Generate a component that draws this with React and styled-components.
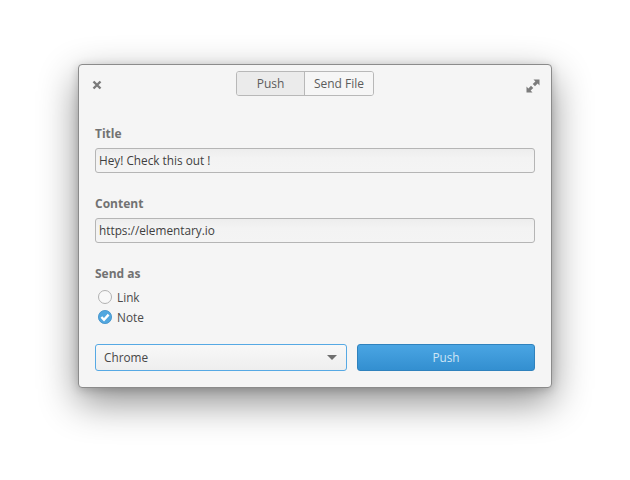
import React from 'react';
import styled, { createGlobalStyle } from 'styled-components';

const Global = createGlobalStyle`
  html, body { margin: 0; padding: 0; background: #fff; }
  body { width: 630px; height: 480px; overflow: hidden; font-family: "Open Sans", "Noto Sans", sans-serif; font-size: 11.8px; color: #4d4d4d; }
`;

const Stage = styled.div`
  padding: 64px 78px 0;
`;
const Win = styled.div`
  box-sizing: border-box;
  width: 474px;
  height: 324px;
  background: #f5f5f5;
  border: 1px solid #8b8b8b;
  border-radius: 4px;
  box-shadow: 0 14px 38px rgba(0,0,0,.45), 0 2px 10px rgba(0,0,0,.18);
  display: flex;
  flex-direction: column;
  padding: 0 15px 0 16px;
`;
const Header = styled.header`
  height: 58px;
  padding-top: 6px;
  box-sizing: border-box;
  margin: 0 -15px 0 -16px;
  display: grid;
  grid-template-columns: 157px auto 1fr;
  align-items: start;
`;
const IconSlot = styled.div`
  display: flex;
  justify-content: ${p => p.$end ? 'flex-end' : 'flex-start'};
  padding: 6px ${p => p.$end ? '11px' : '0'} 0 ${p => p.$end ? '0' : '13px'};
  color: #7e7e7e;
`;
const Segmented = styled.div`
  display: flex;
  height: 25px;
  box-sizing: border-box;
  border: 1px solid #b8b8b8;
  border-radius: 3px;
  overflow: hidden;
`;
const Seg = styled.div`
  width: ${p => p.$w}px;
  display: flex;
  align-items: center;
  justify-content: center;
  padding-bottom: 1px;
  box-sizing: border-box;
  font-size: 12px;
  background: ${p => p.$active ? '#ebebeb' : '#f6f6f6'};
  ${p => p.$active ? 'border-right: 1px solid #b8b8b8;' : ''}
  color: #5c5c5c;
`;
const Field = styled.div`
  display: flex;
  flex-direction: column;
  margin-bottom: 20px;
`;
const Label = styled.label`
  font-weight: 700;
  font-size: 12px;
  color: #727272;
  line-height: 18px;
  height: 18px;
  margin-bottom: 5px;
  margin-top: 2px;
`;
const Input = styled.div`
  box-sizing: border-box;
  width: 440px;
  height: 25px;
  border: 1px solid #b5b5b5;
  border-radius: 3px;
  background: linear-gradient(#ededed, #f3f3f3 40%, #f4f4f4);
  padding: 0 3px;
  line-height: 22px;
  color: #3f3f3f;
`;
const Radios = styled.div`
  display: flex;
  flex-direction: column;
  gap: 4px;
  padding-left: 3px;
  margin-top: 1px;
`;
const RadioRow = styled.div`
  display: flex;
  align-items: center;
  height: 16px;
  gap: 5px;
  line-height: 16px;
  color: #4a4a4a;
`;
const Footer = styled.div`
  display: grid;
  grid-template-columns: 252px 178px;
  gap: 10px;
  margin-top: 19px;
`;
const Select = styled.div`
  box-sizing: border-box;
  height: 27px;
  border: 1px solid #56a9e4;
  border-radius: 3px;
  background: linear-gradient(#f8f8f8, #eeeeee);
  padding: 0 13px 2px 8px;
  display: flex;
  align-items: center;
  justify-content: space-between;
  color: #474747;
`;
const Caret = styled.span`
  width: 0;
  height: 0;
  border-left: 5.5px solid transparent;
  border-right: 5.5px solid transparent;
  border-top: 5.5px solid #6f6f6f;
  margin-right: -4px;
  margin-top: 2px;
`;
const Primary = styled.div`
  box-sizing: border-box;
  height: 27px;
  border: 1px solid #2f82bd;
  border-radius: 3px;
  background: linear-gradient(#4aa5e3, #338fd0);
  padding-bottom: 2px;
  display: flex;
  align-items: center;
  justify-content: center;
  color: #cfe6f6;
`;

const CloseIcon = () => (
  <svg width="10" height="10" viewBox="0 0 10 10" style={{ display: 'block', marginTop: 3 }}>
    <path d="M1.5 1.5 L8.5 8.5 M8.5 1.5 L1.5 8.5" stroke="#7a7a7a" strokeWidth="2.4" fill="none" />
  </svg>
);
const MaxIcon = () => (
  <svg width="14" height="14" viewBox="0 0 14 14" style={{ display: 'block', marginTop: 2 }}>
    <path d="M13.5 .5 H7.5 L9.4 2.4 L6.7 5 L9 7.3 L11.6 4.6 L13.5 6.5 Z" fill="#7c7c7c" />
    <path d="M.5 13.5 H6.5 L4.6 11.6 L7.3 9 L5 6.7 L2.4 9.4 L.5 7.5 Z" fill="#7c7c7c" />
  </svg>
);
const RadioOff = () => (
  <svg width="14" height="14" viewBox="0 0 14 14" style={{ display: 'block' }}>
    <circle cx="7" cy="7" r="6.5" fill="#f8f8f8" stroke="#b0b0b0" />
  </svg>
);
const RadioOn = () => (
  <svg width="14" height="14" viewBox="0 0 14 14" style={{ display: 'block' }}>
    <circle cx="7" cy="7" r="6.6" fill="#52a7df" stroke="#3d8fc8" strokeWidth=".8" />
    <path d="M3.4 7 L6 9.8 L10.6 4.6" stroke="#fff" strokeWidth="2.4" fill="none" />
  </svg>
);

export default function App() {
  return (
    <>
      <Global />
      <Stage>
        <Win>
          <Header>
            <IconSlot><CloseIcon /></IconSlot>
            <Segmented>
              <Seg $w={68} $active>Push</Seg>
              <Seg $w={68}>Send File</Seg>
            </Segmented>
            <IconSlot $end><MaxIcon /></IconSlot>
          </Header>
          <Field>
            <Label>Title</Label>
            <Input>Hey! Check this out !</Input>
          </Field>
          <Field>
            <Label>Content</Label>
            <Input>https://elementary.io</Input>
          </Field>
          <Label>Send as</Label>
          <Radios>
            <RadioRow><RadioOff />Link</RadioRow>
            <RadioRow><RadioOn />Note</RadioRow>
          </Radios>
          <Footer>
            <Select>Chrome<Caret /></Select>
            <Primary>Push</Primary>
          </Footer>
        </Win>
      </Stage>
    </>
  );
}
